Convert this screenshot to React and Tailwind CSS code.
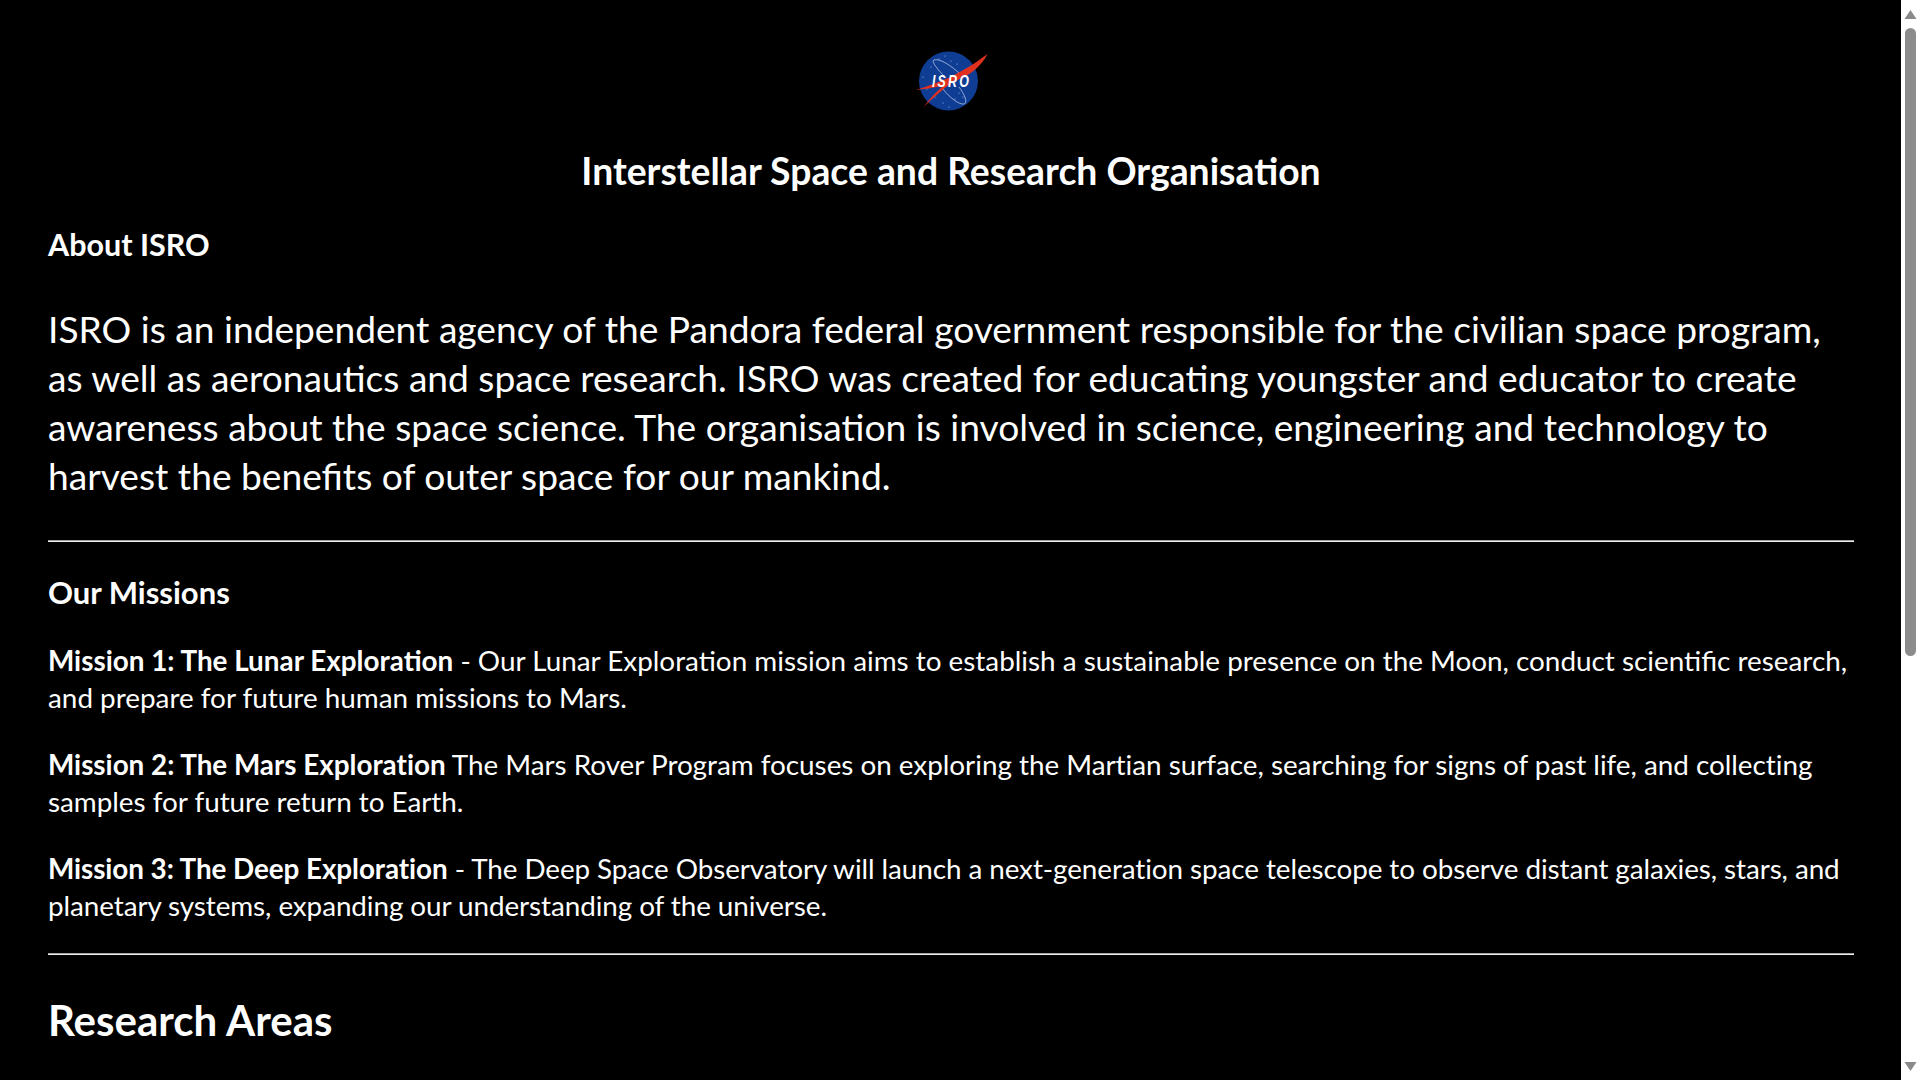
import React from "react";

const missions = [
  {
    title: "Mission 1: The Lunar Exploration",
    tracking: "tracking-[0px]",
    lines: [" - Our Lunar Exploration mission aims to establish a sustainable presence on the Moon, conduct scientific research,", "and prepare for future human missions to Mars."],
  },
  {
    title: "Mission 2: The Mars Exploration",
    tracking: "tracking-[-0.02px]",
    lines: [" The Mars Rover Program focuses on exploring the Martian surface, searching for signs of past life, and collecting", "samples for future return to Earth."],
  },
  {
    title: "Mission 3: The Deep Exploration",
    tracking: "tracking-[-0.08px]",
    lines: [" - The Deep Space Observatory will launch a next-generation space telescope to observe distant galaxies, stars, and", "planetary systems, expanding our understanding of the universe."],
  },
];

const stars = [
  [24, 8], [30, 5], [36, 10], [16, 16], [42, 13], [12, 38], [20, 46], [28, 52], [40, 48], [50, 22], [8, 26], [44, 42], [48, 46], [34, 56],
];

function Logo() {
  return (
    <svg width="73" height="60" viewBox="0 0 73 60" className="block">
      <circle cx="33.5" cy="30" r="29.5" fill="#0f3d94" />
      {stars.map(([x, y]) => (
        <circle key={`${x}-${y}`} cx={x} cy={y} r="0.6" fill="#9fb8e6" />
      ))}
      {/* orbit only shows at the two far ends */}
      <path d="M30 26 C 22 18, 16 10, 19 9 C 24 7, 36 14, 46 24" fill="none" stroke="#c9d6f0" strokeWidth="0.7" />
      <path d="M28 38 C 34 46, 44 54, 49 53 C 53 52, 50 44, 44 36" fill="none" stroke="#c9d6f0" strokeWidth="0.7" />
      <path d="M0.5 39 C 24 32, 46 23, 72.5 3 C 66 16, 54 25, 38 31 C 28 38, 18 47, 8.5 56 C 15 47, 22 40, 28 35 C 18 37, 9 38, 0.5 39 Z" fill="#e0301e" />
      <text transform="translate(36.5 36) scale(0.75 1)" textAnchor="middle" fill="#fff" fontSize="16.5" fontWeight="700" fontStyle="italic" letterSpacing="3" fontFamily="'Liberation Sans', sans-serif">ISRO</text>
    </svg>
  );
}

function Scrollbar() {
  return (
    <aside className="w-[19px] shrink-0 bg-white flex flex-col items-center">
      <svg width="19" height="19" viewBox="0 0 19 19" className="shrink-0 block">
        <path d="M9.5 10 L15.5 19 H3.5 Z" fill="#8a8a8a" />
      </svg>
      <div className="w-[11px] h-[628px] mt-[9px] rounded-[6px] bg-[#8c8c8c]" />
      <div className="flex-1" />
      <svg width="19" height="19" viewBox="0 0 19 19" className="shrink-0 block">
        <path d="M3.5 1 H15.5 L9.5 10 Z" fill="#8a8a8a" />
      </svg>
    </aside>
  );
}

export default function App() {
  return (
    <div className="flex h-screen overflow-hidden bg-black text-white font-['Lato','Open_Sans',sans-serif]">
      <main className="flex-1 min-w-0 pl-[48px] pr-[47px]">
        <div className="flex justify-center pt-[51px]">
          <Logo />
        </div>
        <h1 className="mt-[37px] text-center text-[37.3px] leading-[46px] font-bold">
          Interstellar Space and Research Organisation
        </h1>
        <h2 className="mt-[31px] text-[30.5px] leading-[38px] font-bold">About ISRO</h2>
        <p className="mt-[41px] text-[37.15px] leading-[49px] whitespace-nowrap">
          ISRO is an independent agency of the Pandora federal government responsible for the civilian space program,
          <br />
          as well as aeronautics and space research. ISRO was created for educating youngster and educator to create
          <br />
          awareness about the space science. The organisation is involved in science, engineering and technology to
          <br />
          harvest the benefits of outer space for our mankind.
        </p>
        <hr className="mt-[40px] border-t border-b border-t-[#a0a0a0] border-b-[#eeeeee]" />
        <h2 className="mt-[31px] text-[31px] leading-[38px] font-bold">Our Missions</h2>
        <div className="mt-[31px] flex flex-col gap-[30px]">
          {missions.map((m) => (
            <p key={m.title} className={`text-[27.85px] leading-[37px] whitespace-nowrap ${m.tracking}`}>
              <strong className="font-bold">{m.title}</strong>
              {m.lines[0]}
              <br />
              {m.lines[1]}
            </p>
          ))}
        </div>
        <hr className="mt-[29px] border-t border-b border-t-[#a0a0a0] border-b-[#eeeeee]" />
        <h2 className="mt-[41px] text-[42px] leading-[48px] font-bold">Research Areas</h2>
      </main>
      <Scrollbar />
    </div>
  );
}
